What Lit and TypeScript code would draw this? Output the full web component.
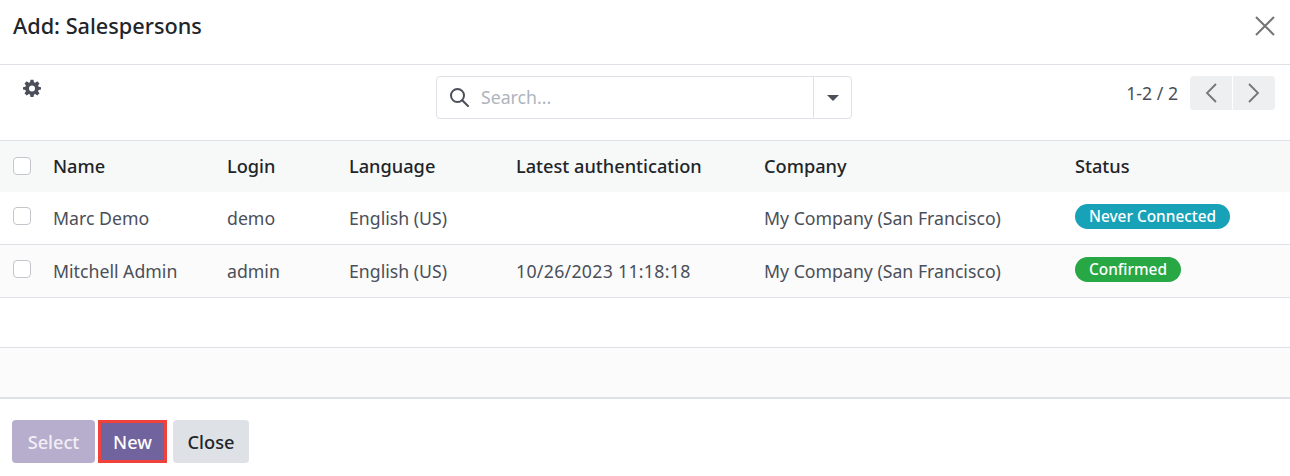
import { LitElement, html, css } from "lit";
import { customElement } from "lit/decorators.js";

const rows = [
  {
    name: "Marc Demo",
    login: "demo",
    auth: "",
    status: "Never Connected",
    tone: "info",
  },
  {
    name: "Mitchell Admin",
    login: "admin",
    auth: "10/26/2023 11:18:18",
    status: "Confirmed",
    tone: "success",
  },
];

@customElement("app-root")
export class AppRoot extends LitElement {
  static styles = css`
    :host {
      display: block;
      width: 1290px;
      height: 476px;
      overflow: hidden;
      background: #fff;
      color: #4a4f59;
      font-family: "Noto Sans", sans-serif;
      font-size: 16px;
    }
    header {
      height: 64px;
      border-bottom: 1px solid #dee2e6;
      display: flex;
      align-items: center;
      justify-content: space-between;
      padding: 0 14px 0 13px;
    }
    h1 {
      margin: 0 0 13px;
      font-size: 21.7px;
      font-weight: 500;
      color: #212529;
    }
    .close {
      display: block;
      width: 22px;
      height: 22px;
      margin-bottom: 12px;
    }
    .toolbar {
      height: 75px;
      display: grid;
      grid-template-columns: 413px 416px 1fr;
      padding: 11px 15px 0 23px;
      box-sizing: border-box;
    }
    .gear {
      display: block;
      width: 18px;
      height: 18px;
      margin-top: 3px;
    }
    .search {
      height: 43px;
      box-sizing: border-box;
      border: 1px solid #dee2e6;
      border-radius: 4px;
      display: flex;
      align-items: center;
    }
    .search-field {
      flex: 1;
      height: 100%;
      display: flex;
      align-items: center;
      gap: 12px;
      padding-left: 13px;
      border-right: 1px solid #dee2e6;
      color: #adb5bd;
      font-size: 17.7px;
    }
    .search-field span {
      margin-bottom: 2px;
    }
    .search-icon {
      display: block;
      width: 20px;
      height: 20px;
      margin-left: -1px;
      margin-bottom: 1px;
    }
    .caret {
      width: 37px;
      display: flex;
      justify-content: center;
    }
    .caret i {
      border: 6px solid transparent;
      border-top: 6px solid #4a4f59;
      border-bottom: 0;
    }
    .pager {
      display: flex;
      justify-content: flex-end;
      align-items: flex-start;
      gap: 12px;
      font-size: 17.7px;
    }
    .pager-text {
      line-height: 34px;
    }
    .pager-btns {
      display: flex;
      gap: 1px;
    }
    .pager-btn {
      width: 42px;
      height: 34px;
      background: #eeeff1;
      display: flex;
      align-items: center;
      justify-content: center;
    }
    .pager-btn:first-child {
      border-radius: 4px 0 0 4px;
    }
    .pager-btn:last-child {
      border-radius: 0 4px 4px 0;
    }
    .pager-btn svg {
      display: block;
      width: 12px;
      height: 20px;
    }
    table {
      width: 1290px;
      table-layout: fixed;
      border-collapse: collapse;
      border-top: 1px solid #dee2e6;
    }
    th,
    td {
      padding: 0 12px;
      text-align: left;
      white-space: nowrap;
      font-size: 17.7px;
      font-weight: 400;
    }
    th {
      font-size: 18.2px;
      font-weight: 500;
      color: #212529;
    }
    td.auth {
      letter-spacing: 0.3px;
    }
    thead tr {
      height: 51px;
      background: #f7f8f8;
    }
    tbody tr {
      height: 53px;
      border-bottom: 1px solid #dee2e6;
    }
    tbody tr.even {
      background: #fbfbfb;
    }
    tbody tr.blank {
      height: 50px;
    }
    tbody tr.last {
      border-bottom: 2px solid #dee2e6;
    }
    .check {
      display: block;
      width: 18px;
      height: 18px;
      box-sizing: border-box;
      border: 1px solid #c3c7cc;
      border-radius: 4px;
      background: #fff;
      margin-left: 1px;
    }
    .row-check {
      margin-top: -4px;
    }
    .badge {
      display: inline-block;
      position: relative;
      top: -2px;
      padding: 0 14px;
      line-height: 25px;
      border-radius: 13px;
      color: #fff;
      font-size: 15.4px;
      font-weight: 500;
    }
    .info {
      background: #17a2b8;
    }
    .success {
      background: #28a745;
    }
    footer {
      display: flex;
      gap: 6px;
      padding: 21px 12px 0;
    }
    button {
      height: 43px;
      box-sizing: border-box;
      border: 0;
      border-radius: 4px;
      font: 500 18.2px "Noto Sans", sans-serif;
      padding: 1px 0 0;
    }
    .select {
      width: 83px;
      background: #b7aecd;
      color: #f1eff5;
    }
    .new {
      width: 69px;
      margin-left: -3px;
      background: #71639e;
      color: #fff;
      border: 3px solid #f0413a;
      border-radius: 0;
    }
    .dismiss {
      width: 76px;
      background: #dee2e6;
      color: #212529;
    }
  `;

  render() {
    return html`
      <header>
        <h1>Add: Salespersons</h1>
        <svg class="close" viewBox="0 0 22 22" fill="none" stroke="#757575" stroke-width="2">
          <path d="M2 2l18 18M20 2L2 20" />
        </svg>
      </header>
      <div class="toolbar">
        <svg class="gear" viewBox="0 0 24 24" fill="#4a4f59">
          <path
            fill-rule="evenodd"
            d="M10 1h4l.6 3.2 1.7.7L19 3l3 3-1.9 2.7.7 1.7L24 11v3l-3.2.6-.7 1.7L22 19l-3 3-2.7-1.9-1.7.7L14 24h-4l-.6-3.2-1.7-.7L5 22l-3-3 1.9-2.7-.7-1.7L0 14v-3l3.2-.6.7-1.7L2 6l3-3 2.7 1.9 1.7-.7zM12 8.5a4 4 0 1 0 0 8 4 4 0 0 0 0-8z"
          />
        </svg>
        <div class="search">
          <div class="search-field">
            <svg class="search-icon" viewBox="0 0 20 20" fill="none" stroke="#4a4f59" stroke-width="2">
              <circle cx="8.5" cy="8.5" r="6.5" />
              <path d="M13.2 13.2L19 19" stroke-linecap="round" />
            </svg>
            <span>Search...</span>
          </div>
          <div class="caret"><i></i></div>
        </div>
        <div class="pager">
          <span class="pager-text">1-2 / 2</span>
          <div class="pager-btns">
            <div class="pager-btn">
              <svg viewBox="0 0 12 20" fill="none" stroke="#757575" stroke-width="1.8"><path d="M11 1L2 10l9 9" /></svg>
            </div>
            <div class="pager-btn">
              <svg viewBox="0 0 12 20" fill="none" stroke="#757575" stroke-width="1.8"><path d="M1 1l9 9-9 9" /></svg>
            </div>
          </div>
        </div>
      </div>
      <table>
        <colgroup>
          <col style="width:41px" />
          <col style="width:174px" />
          <col style="width:122px" />
          <col style="width:167px" />
          <col style="width:248px" />
          <col style="width:311px" />
          <col />
        </colgroup>
        <thead>
          <tr>
            <th><span class="check"></span></th>
            <th>Name</th>
            <th>Login</th>
            <th>Language</th>
            <th>Latest authentication</th>
            <th>Company</th>
            <th>Status</th>
          </tr>
        </thead>
        <tbody>
          ${rows.map(
            (r, i) => html`
              <tr class=${i % 2 ? "even" : ""}>
                <td><span class="check row-check"></span></td>
                <td>${r.name}</td>
                <td>${r.login}</td>
                <td>English (US)</td>
                <td class="auth">${r.auth}</td>
                <td>My Company (San Francisco)</td>
                <td><span class="badge ${r.tone}">${r.status}</span></td>
              </tr>
            `
          )}
          <tr class="blank"><td colspan="7"></td></tr>
          <tr class="blank even last"><td colspan="7"></td></tr>
        </tbody>
      </table>
      <footer>
        <button class="select">Select</button>
        <button class="new">New</button>
        <button class="dismiss">Close</button>
      </footer>
    `;
  }
}

declare global {
  interface HTMLElementTagNameMap {
    "app-root": AppRoot;
  }
}
